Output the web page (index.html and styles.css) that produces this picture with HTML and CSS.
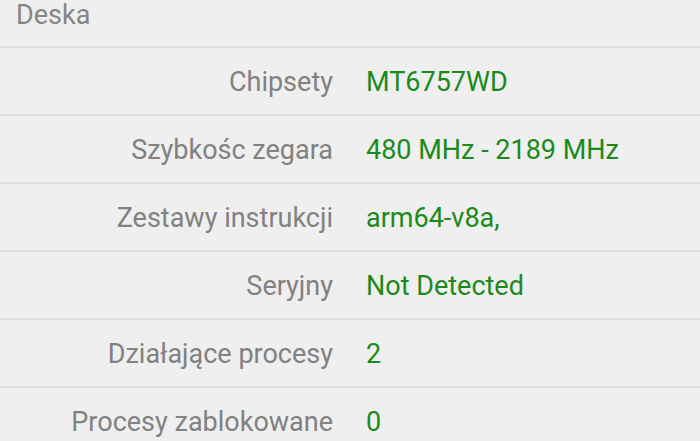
FILE: index.html
```html
<!DOCTYPE html>
<html>
<head>
    <title>Deska</title>
    <link rel="stylesheet" href="styles.css">
</head>
<body>
    <div class="section-title">Deska</div>
    <div class="info-list">
        <div class="info-row"><span class="label">Chipsety</span><span class="value">MT6757WD</span></div>
        <div class="info-row"><span class="label">Szybkośc zegara</span><span class="value">480 MHz - 2189 MHz</span></div>
        <div class="info-row"><span class="label">Zestawy instrukcji</span><span class="value">arm64-v8a,</span></div>
        <div class="info-row"><span class="label">Seryjny</span><span class="value">Not Detected</span></div>
        <div class="info-row"><span class="label">Działające procesy</span><span class="value">2</span></div>
        <div class="info-row"><span class="label">Procesy zablokowane</span><span class="value">0</span></div>
    </div>
</body>
</html>
```

FILE: styles.css
```css
body {
    margin: 0;
    background-color: #efefef;
    font-family: Roboto, "Noto Sans", sans-serif;
    font-size: 27px;
}

.section-title {
    height: 46px;
    padding-left: 16px;
    line-height: 30px;
    color: #858585;
    border-bottom: 2px solid #dedede;
}

.info-row {
    display: flex;
    align-items: center;
    box-sizing: border-box;
    height: 68px;
    padding-top: 2px;
    border-bottom: 2px solid #dedede;
}

.label {
    width: 333px;
    padding-right: 33px;
    text-align: right;
    color: #818181;
}

.value {
    color: #1b8a1b;
}
```
